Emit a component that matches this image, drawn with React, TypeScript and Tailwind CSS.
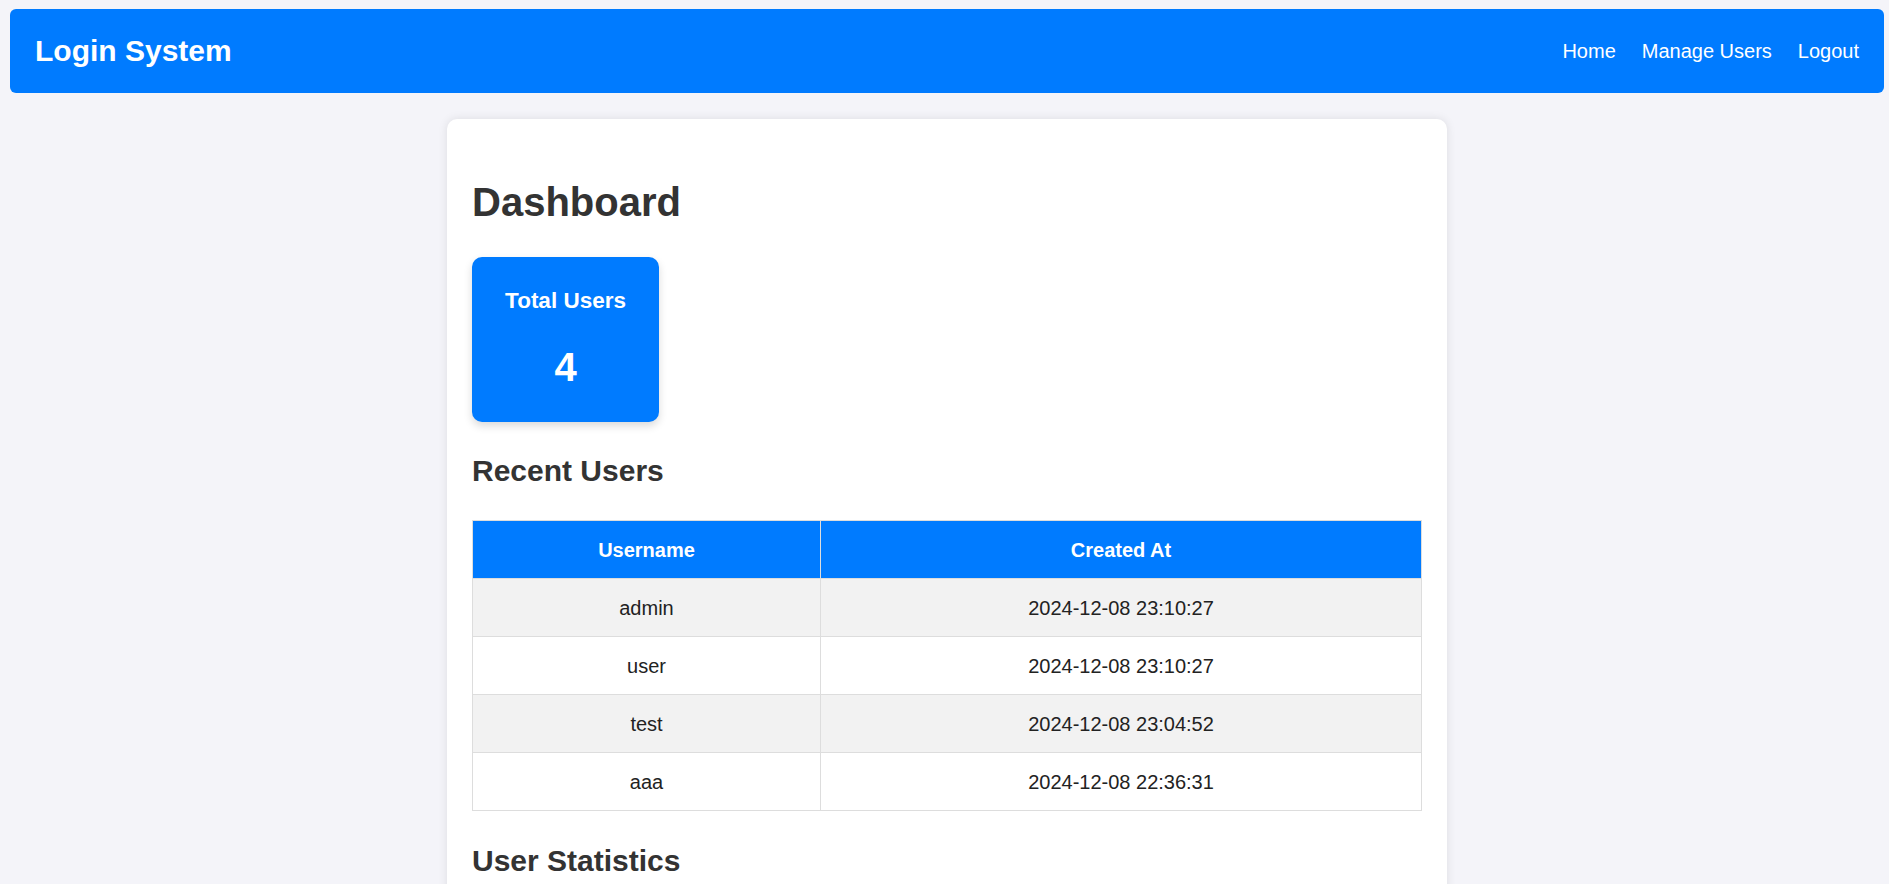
import React from "react";

const users = [
  { name: "admin", created: "2024-12-08 23:10:27" },
  { name: "user", created: "2024-12-08 23:10:27" },
  { name: "test", created: "2024-12-08 23:04:52" },
  { name: "aaa", created: "2024-12-08 22:36:31" },
];

export default function App() {
  return (
    <div
      className="min-h-screen bg-[#f4f4f9] text-[#333] pt-[9px]"
      style={{ fontFamily: '"Liberation Sans", Arial, sans-serif' }}
    >
      <header className="ml-[10px] mr-[5px] h-[84px] rounded-[6px] bg-[#007bff] px-[25px] flex items-center justify-between text-white">
        <div className="text-[30px] font-bold leading-[34px]">Login System</div>
        <nav className="flex items-center gap-[26px] text-[20px] leading-[23px]">
          <a className="text-white">Home</a>
          <a className="text-white">Manage Users</a>
          <a className="text-white">Logout</a>
        </nav>
      </header>

      <div className="flex justify-center pl-[5px] mt-[26px]">
        <main className="w-[1000px] rounded-[10px] bg-white shadow-[0_0_10px_rgba(0,0,0,0.1)] px-[25px] pt-[60px] pb-[40px]">
          <h1 className="text-[40px] font-bold leading-[46px] text-[#333]">Dashboard</h1>

          <div className="mt-[32px] w-[187px] h-[165px] rounded-[10px] bg-[#007bff] text-white text-center pt-[31px] shadow-[0_4px_8px_rgba(0,0,0,0.15)]">
            <div className="text-[22.5px] font-bold leading-[26px]">Total Users</div>
            <div className="mt-[30px] text-[40px] font-bold leading-[46px]">4</div>
          </div>

          <h2 className="mt-[32px] text-[30px] font-bold leading-[34px] text-[#333]">Recent Users</h2>

          <table className="mt-[32px] w-full border-collapse text-[20px] text-center">
            <thead>
              <tr className="bg-[#007bff] text-white">
                <th className="w-[348px] h-[58px] p-0 border border-[#ddd] font-bold align-middle">Username</th>
                <th className="h-[58px] p-0 border border-[#ddd] font-bold align-middle">Created At</th>
              </tr>
            </thead>
            <tbody>
              {users.map((u, i) => (
                <tr key={u.name} className={i % 2 === 0 ? "bg-[#f2f2f2]" : "bg-white"}>
                  <td className="h-[58px] p-0 border border-[#ddd] align-middle text-[#222]">{u.name}</td>
                  <td className="h-[58px] p-0 border border-[#ddd] align-middle text-[#222]">{u.created}</td>
                </tr>
              ))}
            </tbody>
          </table>

          <h2 className="mt-[33px] text-[30px] font-bold leading-[34px] text-[#333]">User Statistics</h2>
          <div className="h-[200px]" />
        </main>
      </div>
    </div>
  );
}
